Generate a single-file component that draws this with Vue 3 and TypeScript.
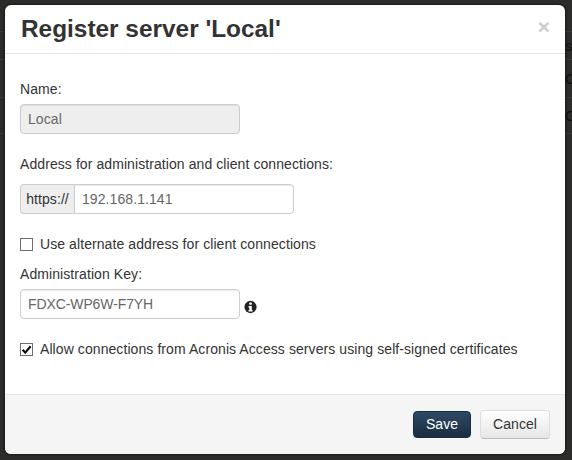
<script setup lang="ts">
const title = "Register server 'Local'"
const behind = [
  { text: 's', top: 37 },
  { text: 'C', top: 70 },
  { text: 'C', top: 107 },
]
</script>

<template>
  <div class="backdrop">
    <span v-for="b in behind" :key="b.top" class="behind" :style="{ top: b.top + 'px' }">{{ b.text }}</span>
    <div class="modal">
      <header class="head">
        <h3>{{ title }}</h3>
        <span class="close">×</span>
      </header>
      <section class="body">
        <label class="lbl first">Name:</label>
        <input class="field disabled" value="Local" disabled />
        <label class="lbl addr">Address for administration and client connections:</label>
        <div class="group">
          <span class="prefix">https://</span>
          <input class="field grouped" value="192.168.1.141" />
        </div>
        <div class="check alt">
          <span class="box"></span>
          <span>Use alternate address for client connections</span>
        </div>
        <label class="lbl key">Administration Key:</label>
        <div class="keyrow">
          <input class="field keyfield" value="FDXC-WP6W-F7YH" />
          <svg class="info" viewBox="0 0 14 14" width="13" height="14">
            <circle cx="7" cy="7" r="6.6" fill="#222" />
            <rect x="5.6" y="2.2" width="2.8" height="2.4" rx="0.5" fill="#fff" />
            <path d="M4.9 5.9h3.5v4.3h0.9v1.6H4.8v-1.6h0.9V7.5h-0.8z" fill="#fff" />
          </svg>
        </div>
        <div class="check allow">
          <span class="box">
            <svg viewBox="0 0 13 13" width="13" height="13">
              <path d="M2.6 6.8 L5.2 9.6 L10.6 3.2" fill="none" stroke="#111" stroke-width="2.2" />
            </svg>
          </span>
          <span>Allow connections from Acronis Access servers using self-signed certificates</span>
        </div>
      </section>
      <footer class="foot">
        <button class="btn save">Save</button>
        <button class="btn cancel">Cancel</button>
      </footer>
    </div>
  </div>
</template>

<style>
html, body { margin: 0; background: #2c2c2b; }
</style>

<style scoped>
.backdrop {
  position: relative;
  width: 572px;
  height: 460px;
  box-sizing: border-box;
  padding: 5px 7px 6px 5px;
  background-color: #2c2c2b;
  background-image:
    linear-gradient(#3a3a39, #3a3a39),
    linear-gradient(#3a3a39, #3a3a39),
    linear-gradient(#3a3a39, #3a3a39),
    linear-gradient(#3a3a39, #3a3a39);
  background-repeat: no-repeat;
  background-size: 100% 1px;
  background-position: 0 31px, 0 59px, 0 97px, 0 133px;
  font-family: "Liberation Sans", Arial, sans-serif;
  font-size: 14px;
  letter-spacing: 0.08px;
  color: #333;
  overflow: hidden;
}
.behind {
  position: absolute;
  left: 565px;
  font-size: 15px;
  line-height: 18px;
  color: #111;
}
.modal {
  position: relative;
  height: 449px;
  background: #fff;
  border-radius: 6px;
  display: flex;
  flex-direction: column;
  overflow: hidden;
  box-shadow: 0 0 2px 1px rgba(0, 0, 0, 0.45);
}
.head {
  height: 48px;
  border-bottom: 1px solid #e5e5e5;
  display: flex;
  align-items: flex-start;
  justify-content: space-between;
  padding: 0 15px 0 16px;
  flex: none;
}
h3 {
  margin: 0;
  font-size: 24.4px;
  line-height: 47px;
  font-weight: bold;
  letter-spacing: 0;
  color: #333;
}
.close {
  font-size: 21px;
  font-weight: bold;
  line-height: 21px;
  margin-top: 11px;
  color: #ccc;
}
.body {
  flex: 1;
  padding: 25px 15px 0;
  display: flex;
  flex-direction: column;
  align-items: flex-start;
}
.lbl { display: block; line-height: 20px; }
.first { margin-bottom: 5px; height: 20px; }
.field {
  width: 220px;
  height: 30px;
  box-sizing: border-box;
  padding: 0 7px;
  border: 1px solid #ccc;
  border-radius: 4px;
  font: inherit;
  letter-spacing: 0.08px;
  color: #666;
  background: #fff;
  box-shadow: inset 0 1px 1px rgba(0, 0, 0, 0.075);
  outline: none;
}
.disabled { background: #eee; opacity: 1; }
.keyfield { letter-spacing: -0.1px; }
.addr { margin-top: 20px; margin-bottom: 10px; }
.group { display: flex; }
.prefix {
  width: 54px;
  height: 30px;
  box-sizing: border-box;
  background: #eee;
  border: 1px solid #ccc;
  border-right: 0;
  border-radius: 4px 0 0 4px;
  line-height: 28px;
  text-align: center;
}
.grouped { border-radius: 0 4px 4px 0; }
.check {
  display: flex;
  align-items: center;
  gap: 7px;
  line-height: 20px;
}
.alt { margin-top: 20px; }
.allow { margin-top: 20px; }
.box {
  width: 13px;
  height: 13px;
  box-sizing: border-box;
  border: 1px solid #6e6e6e;
  background: #fff;
  display: block;
  flex: none;
  position: relative;
}
.box svg { position: absolute; left: -1px; top: -1px; display: block; }
.key { margin-top: 10px; margin-bottom: 5px; }
.keyrow { display: flex; align-items: flex-start; }
.info { margin: 11px 0 0 4px; display: block; }
.foot {
  margin-top: auto;
  height: 60px;
  box-sizing: border-box;
  border-top: 1px solid #e5e5e5;
  background: #f5f5f5;
  display: flex;
  justify-content: flex-end;
  align-items: center;
  gap: 9px;
  padding: 0 15px 1px 0;
  flex: none;
}
.btn {
  font: inherit;
  letter-spacing: 0.08px;
  border-radius: 4px;
  padding: 0;
  cursor: pointer;
}
.save {
  width: 58px;
  height: 27px;
  color: #fff;
  border: 1px solid #1a2a3a;
  background: linear-gradient(#2e4a66, #1a2c40);
}
.cancel {
  width: 70px;
  height: 29px;
  color: #333;
  border: 1px solid #ddd;
  border-bottom-color: #bbb;
  background: linear-gradient(#fff, #e6e6e6);
}
</style>
